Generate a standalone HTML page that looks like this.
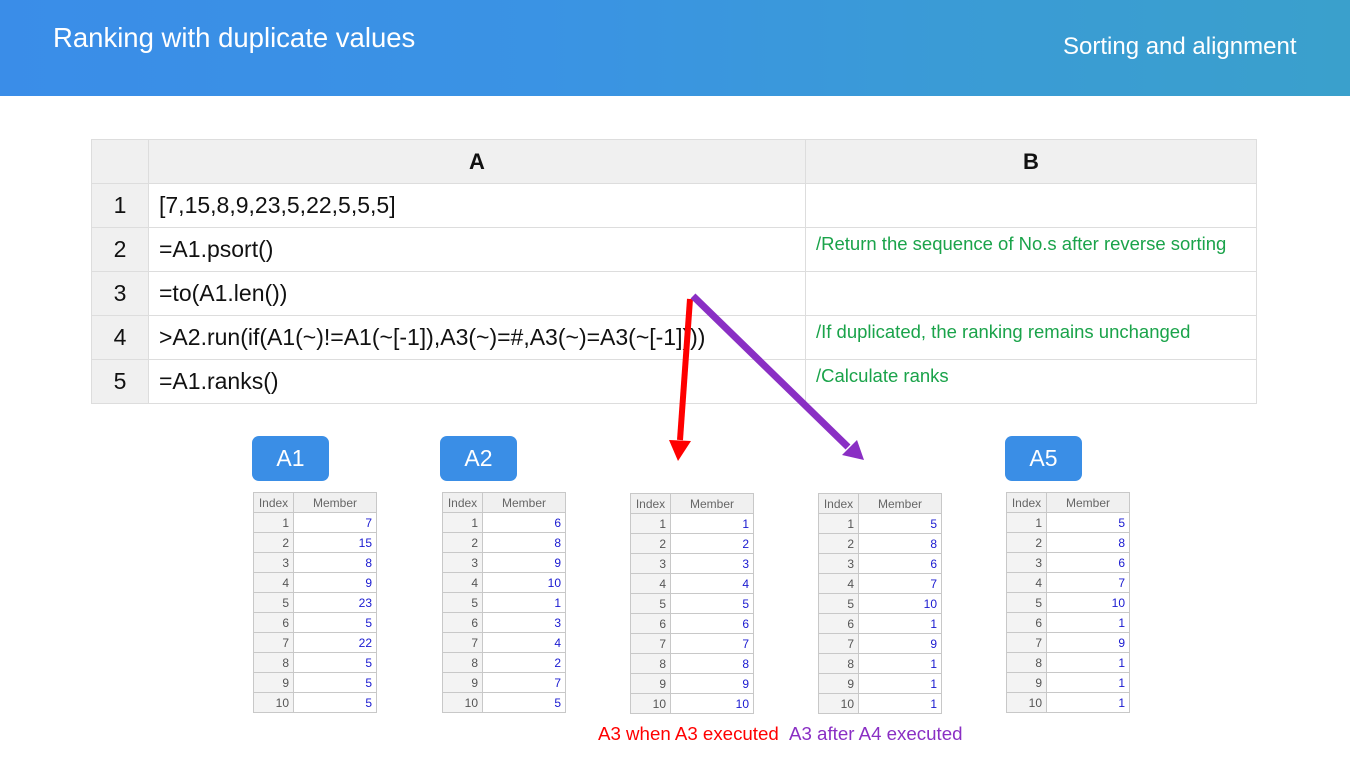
<!DOCTYPE html>
<html><head><style>
body{margin:0;width:1350px;height:759px;position:relative;overflow:hidden;background:#fff;font-family:"Liberation Sans",sans-serif}
.ban{position:absolute;left:0;top:0;width:1350px;height:96px;background:linear-gradient(90deg,#3a8de8 0%,#3a93e4 40%,#3a9bd6 70%,#3aa0cc 100%)}
.t1{position:absolute;left:53px;top:22px;color:#fff;font-size:27.5px}
.t2{position:absolute;left:1063px;top:33px;color:#fff;font-size:24px}
table.m{position:absolute;left:91px;top:139px;border-collapse:collapse;table-layout:fixed}
table.m tr{height:44px}
table.m td{border:1px solid #ddd;padding:0;font-size:23px;color:#111;box-sizing:border-box}
table.m tr:first-child td{background:#f0f0f0;font-weight:bold;text-align:center;font-size:22px}
table.m td.n{background:#f0f0f0;text-align:center;width:57px}
table.m td.a{width:657px;padding-left:10px}
table.m td.b{width:451px;padding-left:10px;color:#1aa34a;font-size:18.5px;vertical-align:top;padding-top:5px}
.lab{position:absolute;top:436px;width:77px;height:45px;background:#3a8ee6;border-radius:7px;color:#fff;font-size:23px;text-align:center;line-height:45px}
table.s{position:absolute;top:492px;border-collapse:collapse;font-size:12px}
table.s td{border:1px solid #c8c8c8;height:19px;padding:0 4px;text-align:right;color:#555}
table.s td:first-child{width:31px;background:#f3f3f3}
table.s td:last-child{width:74px;color:#1a1ad0}
table.s tr:first-child td{text-align:center;background:#f0f0f0;color:#666}
.cap{position:absolute;top:723px;font-size:18.7px}
</style></head><body>
<div class="ban"></div>
<div class="t1">Ranking with duplicate values</div>
<div class="t2">Sorting and alignment</div>
<table class="m">
<tr><td class="n"></td><td class="a" style="padding:0">A</td><td class="b" style="padding:0;color:#111;font-size:22px;vertical-align:middle">B</td></tr>
<tr><td class="n">1</td><td class="a">[7,15,8,9,23,5,22,5,5,5]</td><td class="b"></td></tr>
<tr><td class="n">2</td><td class="a">=A1.psort()</td><td class="b">/Return the sequence of No.s after reverse sorting</td></tr>
<tr><td class="n">3</td><td class="a">=to(A1.len())</td><td class="b"></td></tr>
<tr><td class="n">4</td><td class="a">&gt;A2.run(if(A1(~)!=A1(~[-1]),A3(~)=#,A3(~)=A3(~[-1])))</td><td class="b">/If duplicated, the ranking remains unchanged</td></tr>
<tr><td class="n">5</td><td class="a">=A1.ranks()</td><td class="b">/Calculate ranks</td></tr>
</table>
<div class="lab" style="left:252px">A1</div>
<div class="lab" style="left:440px">A2</div>
<div class="lab" style="left:1005px">A5</div>
<table class="s" style="left:253px"><tr><td>Index</td><td>Member</td></tr><tr><td>1</td><td>7</td></tr><tr><td>2</td><td>15</td></tr><tr><td>3</td><td>8</td></tr><tr><td>4</td><td>9</td></tr><tr><td>5</td><td>23</td></tr><tr><td>6</td><td>5</td></tr><tr><td>7</td><td>22</td></tr><tr><td>8</td><td>5</td></tr><tr><td>9</td><td>5</td></tr><tr><td>10</td><td>5</td></tr></table>
<table class="s" style="left:442px"><tr><td>Index</td><td>Member</td></tr><tr><td>1</td><td>6</td></tr><tr><td>2</td><td>8</td></tr><tr><td>3</td><td>9</td></tr><tr><td>4</td><td>10</td></tr><tr><td>5</td><td>1</td></tr><tr><td>6</td><td>3</td></tr><tr><td>7</td><td>4</td></tr><tr><td>8</td><td>2</td></tr><tr><td>9</td><td>7</td></tr><tr><td>10</td><td>5</td></tr></table>
<table class="s" style="left:630px;top:493px"><tr><td>Index</td><td>Member</td></tr><tr><td>1</td><td>1</td></tr><tr><td>2</td><td>2</td></tr><tr><td>3</td><td>3</td></tr><tr><td>4</td><td>4</td></tr><tr><td>5</td><td>5</td></tr><tr><td>6</td><td>6</td></tr><tr><td>7</td><td>7</td></tr><tr><td>8</td><td>8</td></tr><tr><td>9</td><td>9</td></tr><tr><td>10</td><td>10</td></tr></table>
<table class="s" style="left:818px;top:493px"><tr><td>Index</td><td>Member</td></tr><tr><td>1</td><td>5</td></tr><tr><td>2</td><td>8</td></tr><tr><td>3</td><td>6</td></tr><tr><td>4</td><td>7</td></tr><tr><td>5</td><td>10</td></tr><tr><td>6</td><td>1</td></tr><tr><td>7</td><td>9</td></tr><tr><td>8</td><td>1</td></tr><tr><td>9</td><td>1</td></tr><tr><td>10</td><td>1</td></tr></table>
<table class="s" style="left:1006px"><tr><td>Index</td><td>Member</td></tr><tr><td>1</td><td>5</td></tr><tr><td>2</td><td>8</td></tr><tr><td>3</td><td>6</td></tr><tr><td>4</td><td>7</td></tr><tr><td>5</td><td>10</td></tr><tr><td>6</td><td>1</td></tr><tr><td>7</td><td>9</td></tr><tr><td>8</td><td>1</td></tr><tr><td>9</td><td>1</td></tr><tr><td>10</td><td>1</td></tr></table>
<svg style="position:absolute;left:0;top:0" width="1350" height="759">
<line x1="690" y1="299" x2="680" y2="440" stroke="#f00" stroke-width="6"/>
<polygon points="669,440 691,441 678,461" fill="#f00"/>
<line x1="693" y1="296" x2="848" y2="447" stroke="#8a2fc4" stroke-width="7"/>
<polygon points="842,455 857,440 864,460" fill="#8a2fc4"/>
</svg>
<div class="cap" style="left:598px;color:#f00">A3 when A3 executed</div>
<div class="cap" style="left:789px;color:#8a2fc4">A3 after A4 executed</div>
</body></html>
